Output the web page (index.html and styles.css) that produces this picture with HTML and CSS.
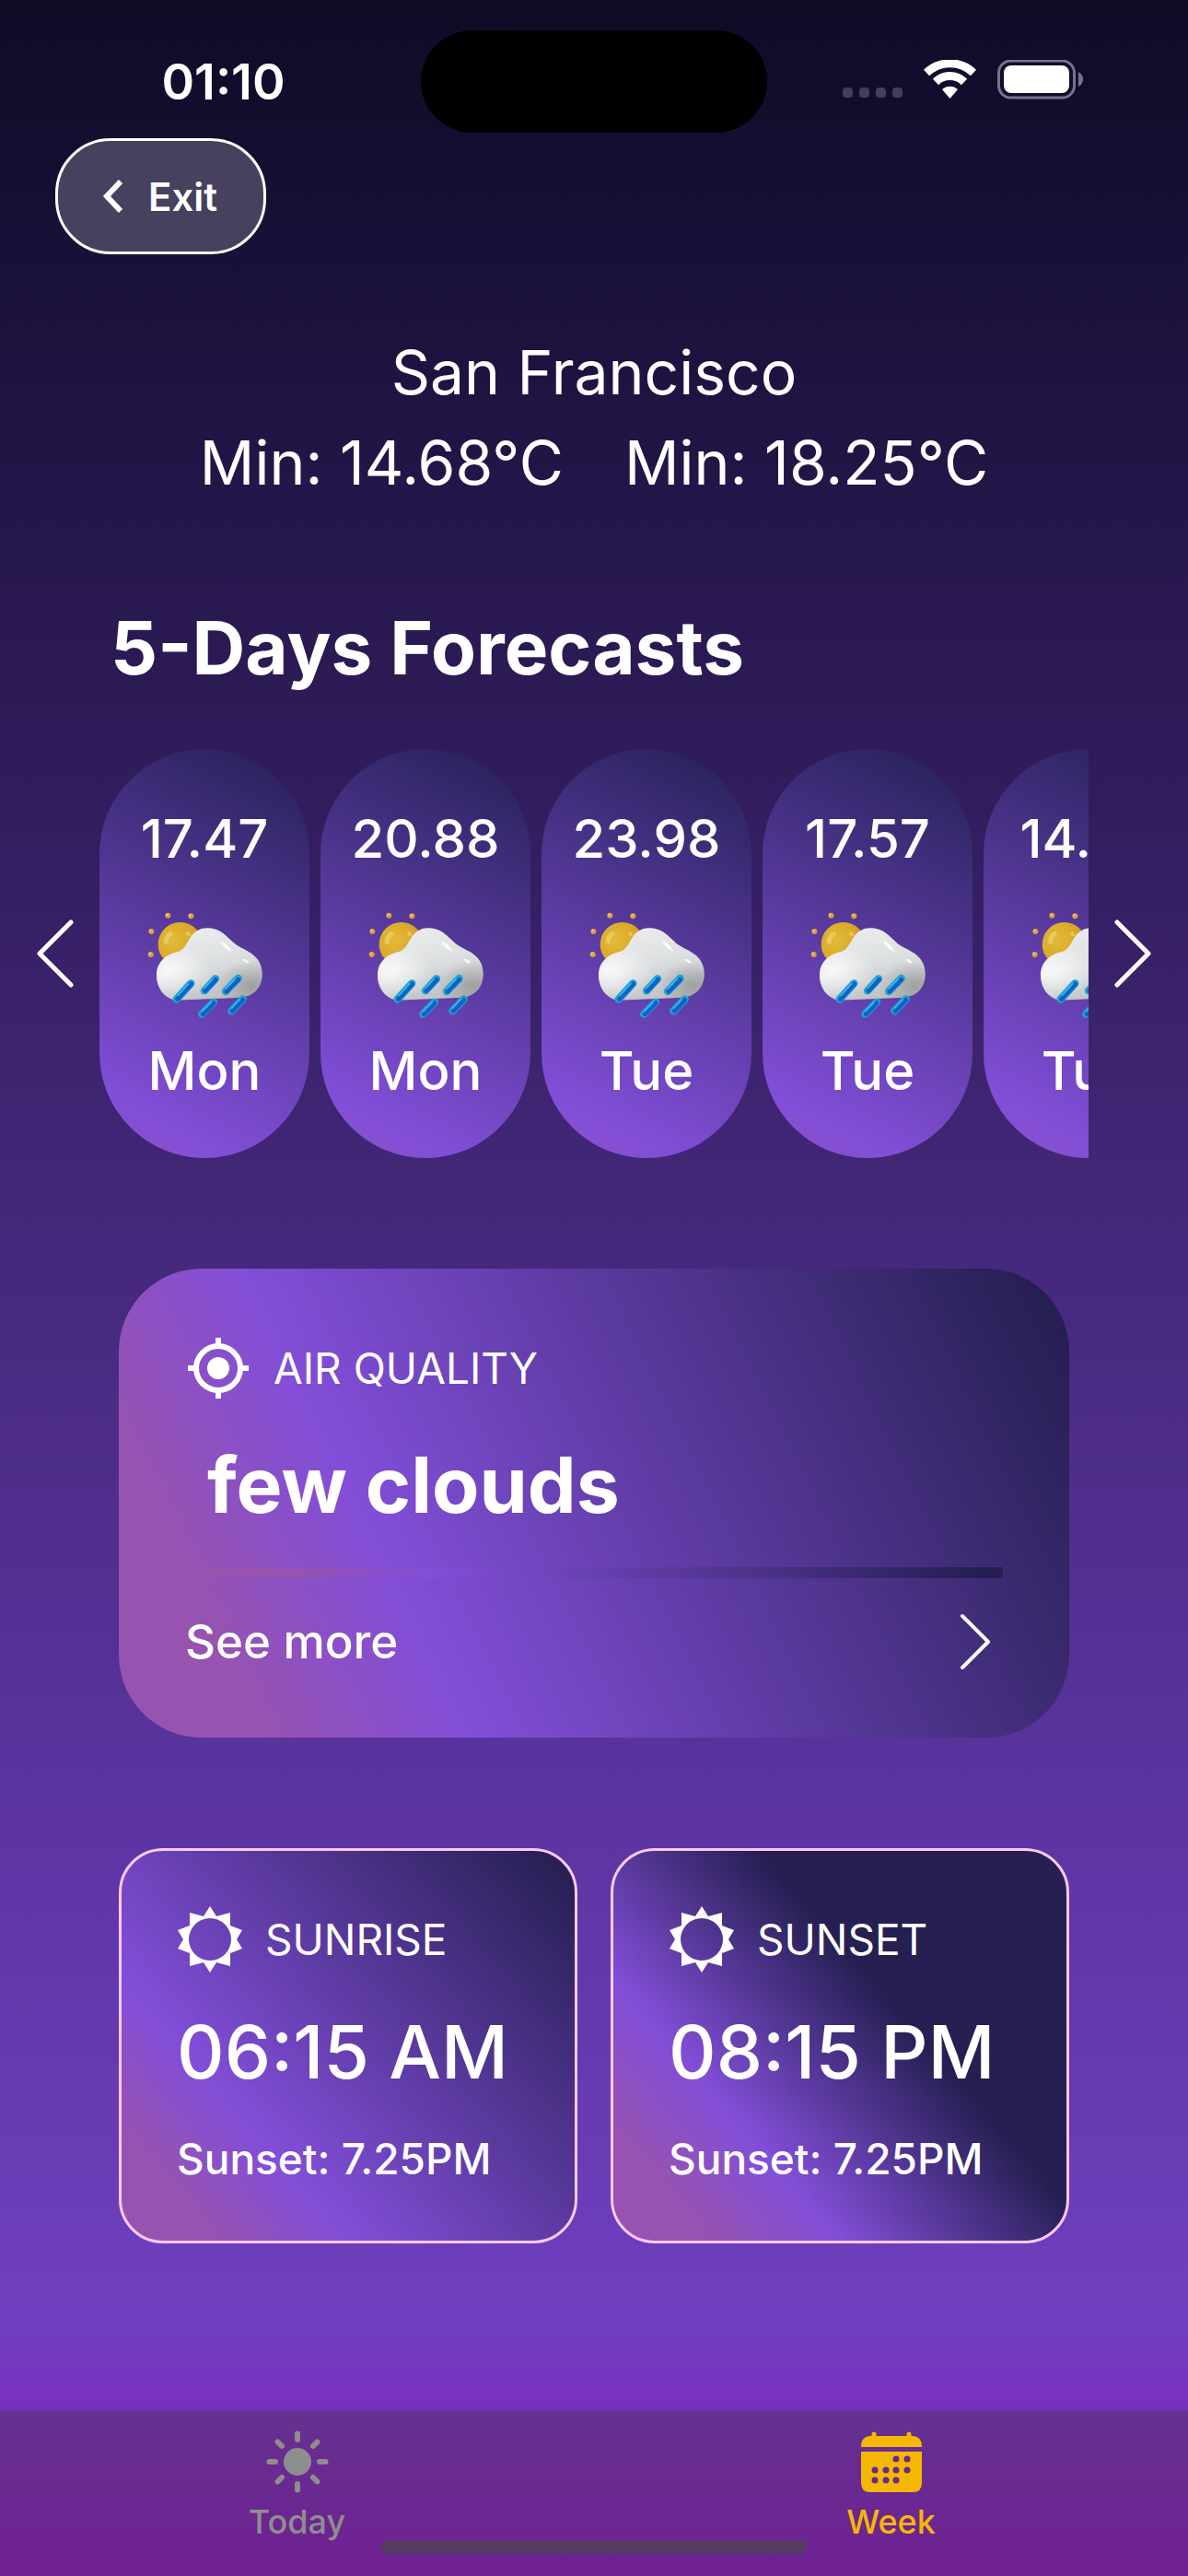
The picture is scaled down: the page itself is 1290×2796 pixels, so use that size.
FILE: index.html
```html
<!DOCTYPE html>
<html lang="en">
<head>
<meta charset="utf-8">
<meta name="viewport" content="width=device-width, initial-scale=1">
<title>Weekly forecast</title>
<link rel="stylesheet" href="styles.css">
</head>
<body>
<svg class="sprite" aria-hidden="true">
  <defs>
    <radialGradient id="sunFill" cx="35%" cy="40%" r="75%">
      <stop offset="0" stop-color="#e2ba38"/>
      <stop offset="0.6" stop-color="#dba92a"/>
      <stop offset="1" stop-color="#c08020"/>
    </radialGradient>
    <linearGradient id="cloudFill" x1="0.3" y1="0" x2="0.6" y2="1">
      <stop offset="0" stop-color="#ececec"/>
      <stop offset="0.5" stop-color="#dcdfe1"/>
      <stop offset="1" stop-color="#bfc0c1"/>
    </linearGradient>
    <radialGradient id="cloudShade" cx="0.9" cy="0.8" r="0.35">
      <stop offset="0" stop-color="#8f8f8f" stop-opacity="0.7"/>
      <stop offset="1" stop-color="#8f8f8f" stop-opacity="0"/>
    </radialGradient>
    <radialGradient id="cloudLight" cx="0.12" cy="0.6" r="0.4">
      <stop offset="0" stop-color="#fff" stop-opacity="0.8"/>
      <stop offset="1" stop-color="#fff" stop-opacity="0"/>
    </radialGradient>
    <symbol id="weather" viewBox="0 0 492 450">
      <circle cx="167" cy="165" r="72" fill="url(#sunFill)"/>
      <path d="M112 160q3-32 26-38l8 10q-18 8-19 34zM184 130l10-8 9 14-9 3z" fill="#f0d878" opacity="0.6"/>
      <g fill="#dca238">
        <circle cx="127" cy="71" r="9"/><circle cx="202" cy="73" r="9"/>
        <circle cx="73" cy="123" r="9"/><circle cx="71" cy="198" r="9"/>
      </g>
      <g fill="#f5d690">
        <circle cx="124" cy="68" r="3"/><circle cx="199" cy="70" r="3"/>
        <circle cx="70" cy="120" r="3"/><circle cx="68" cy="195" r="3"/>
      </g>
      <path d="M150 347C112 338 90 304 90 266C90 222 122 196 160 189C196 180 192 112 256 112C304 112 320 146 352 168C384 188 434 200 434 262C434 308 404 334 366 338Z" fill="url(#cloudFill)"/>
      <path d="M150 347C112 338 90 304 90 266C90 222 122 196 160 189C196 180 192 112 256 112C304 112 320 146 352 168C384 188 434 200 434 262C434 308 404 334 366 338Z" fill="url(#cloudLight)"/>
      <path d="M150 347C112 338 90 304 90 266C90 222 122 196 160 189C196 180 192 112 256 112C304 112 320 146 352 168C384 188 434 200 434 262C434 308 404 334 366 338Z" fill="url(#cloudShade)"/>
      <path d="M296 154q22 4 40 36q-26-8-40-36zM370 212q18 0 22 14q-16 0-22-14z" fill="#fff" opacity="0.85"/>
      <g stroke-linecap="round" fill="none">
        <path d="M155 344L202 292M246 316L282 277M315 318L356 276M238 392L276 353M334 382L371 343" stroke="#1fa3d6" stroke-width="25"/>
        <path d="M158 343L203 294M249 316L283 280M318 318L356 280M241 392L276 356M337 382L371 346" stroke="#1160c8" stroke-width="15"/>
        <path d="M160 332L195 293M247 307L274 278M316 309L346 278M239 383L268 353M335 373L362 344" stroke="#2fc6ee" stroke-width="4"/>
      </g>
    </symbol>
    <symbol id="sunburst" viewBox="0 0 72 72">
      <path fill-rule="evenodd" d="M36 0L43 11L58 7V21L71 26L65 36L71 46L58 51V65L43 61L36 72L29 61L14 65V51L1 46L7 36L1 26L14 21V7L29 11ZM36 13A23 23 0 1 0 36 59A23 23 0 1 0 36 13Z" fill="currentColor"/>
    </symbol>
  </defs>
</svg>

<div class="screen">
  <header class="status">
    <time class="status-time">01:10</time>
    <div class="island"></div>
    <div class="status-icons">
      <svg width="65" height="44" viewBox="0 0 65 44" fill="#433e5a" aria-hidden="true">
        <rect x="0" y="30" width="11" height="11" rx="4"/><rect x="18" y="30" width="11" height="11" rx="4"/>
        <rect x="36" y="30" width="11" height="11" rx="4"/><rect x="54" y="30" width="11" height="11" rx="4"/>
      </svg>
      <svg width="57" height="44" viewBox="0 0 57 44" aria-hidden="true">
        <path d="M3 14A37 37 0 0 1 54 14" fill="none" stroke="#fff" stroke-width="9"/>
        <path d="M13 24A22 22 0 0 1 44 24" fill="none" stroke="#fff" stroke-width="9"/>
        <path d="M20 32A12.500 12.500 0 0 1 37 32L28.500 42Z" fill="#fff"/>
      </svg>
      <svg width="94" height="44" viewBox="0 0 94 44" aria-hidden="true">
        <rect x="1.500" y="1" width="82" height="40" rx="13" fill="none" stroke="#787388" stroke-width="3"/>
        <rect x="7" y="6" width="71" height="30" rx="8" fill="#fff"/>
        <path d="M88 13Q93 16 93 21Q93 26 88 29Z" fill="#787388"/>
      </svg>
    </div>
  </header>

  <button class="exit" type="button">
    <svg width="24" height="38" viewBox="0 0 24 38" aria-hidden="true"><path d="M20 3L5 19L20 35" fill="none" stroke="#fff" stroke-width="6"/></svg>
    Exit
  </button>

  <main class="content">
    <section class="place">
      <h1 class="city">San Francisco</h1>
      <p class="range"><span>Min: 14.68°C</span><span>Min: 18.25°C</span></p>
    </section>

    <h2 class="heading">5-Days Forecasts</h2>

    <section class="carousel">
      <button class="arrow previous" type="button" aria-label="Previous">
        <svg width="42" height="76" viewBox="0 0 42 76" aria-hidden="true"><path d="M38 4L4 38L38 72" class="thin"/></svg>
      </button>
      <ul class="days">
        <li class="day"><span>17.47</span><svg class="weather"><use href="#weather"/></svg><span>Mon</span></li>
        <li class="day"><span>20.88</span><svg class="weather"><use href="#weather"/></svg><span>Mon</span></li>
        <li class="day"><span>23.98</span><svg class="weather"><use href="#weather"/></svg><span>Tue</span></li>
        <li class="day"><span>17.57</span><svg class="weather"><use href="#weather"/></svg><span>Tue</span></li>
        <li class="day"><span>14.68</span><svg class="weather"><use href="#weather"/></svg><span>Tue</span></li>
      </ul>
      <button class="arrow next" type="button" aria-label="Next">
        <svg width="42" height="76" viewBox="0 0 42 76" aria-hidden="true"><path d="M4 4L38 38L4 72" class="thin"/></svg>
      </button>
    </section>

    <section class="air">
      <h3 class="label">
        <svg width="72" height="72" viewBox="0 0 72 72" aria-hidden="true">
          <circle cx="36" cy="36" r="24" fill="none" stroke="#fff" stroke-width="6"/>
          <circle cx="36" cy="36" r="12" fill="#fff"/>
          <path d="M36 3V12M36 60V69M3 36H12M60 36H69" stroke="#fff" stroke-width="6"/>
        </svg>
        AIR QUALITY
      </h3>
      <p class="air-value">few clouds</p>
      <div class="bar"></div>
      <a class="more" href="#">See more
        <svg width="36" height="62" viewBox="0 0 36 62" aria-hidden="true"><path d="M4 3L32 31L4 59" class="thin light"/></svg>
      </a>
    </section>

    <div class="pair">
      <section class="sun sunrise">
        <h3 class="label"><svg width="72" height="72"><use href="#sunburst"/></svg>SUNRISE</h3>
        <p class="sun-time">06:15 AM</p>
        <p class="sun-note">Sunset: 7.25PM</p>
      </section>
      <section class="sun sunset">
        <h3 class="label"><svg width="72" height="72"><use href="#sunburst"/></svg>SUNSET</h3>
        <p class="sun-time">08:15 PM</p>
        <p class="sun-note">Sunset: 7.25PM</p>
      </section>
    </div>
  </main>

  <nav class="tabs">
    <a class="tab" href="#">
      <svg width="68" height="68" viewBox="0 0 68 68" aria-hidden="true">
        <circle cx="34" cy="34" r="15" fill="currentColor"/>
        <path d="M34 3.500V10M34 58V64.500M3.500 34H10M58 34H64.500M12.500 12.500L17 17M51 51L55.500 55.500M55.500 12.500L51 17M17 51L12.500 55.500" stroke="currentColor" stroke-width="6" stroke-linecap="round"/>
      </svg>
      Today
    </a>
    <a class="tab active" href="#">
      <svg width="68" height="68" viewBox="0 0 68 68" aria-hidden="true">
        <path d="M1 18Q1 6 12 6H56Q67 6 67 18ZM1 23H67V57Q67 67 57 67H11Q1 67 1 57Z" fill="currentColor"/>
        <path d="M15 4V8M53 4V8" stroke="currentColor" stroke-width="5" stroke-linecap="round"/>
        <g fill="#67298e">
          <circle cx="39" cy="31" r="3.500"/><circle cx="51" cy="31" r="3.500"/>
          <circle cx="16" cy="43" r="3.500"/><circle cx="28" cy="43" r="3.500"/><circle cx="39" cy="43" r="3.500"/><circle cx="51" cy="43" r="3.500"/>
          <circle cx="16" cy="54" r="3.500"/><circle cx="28" cy="54" r="3.500"/><circle cx="39" cy="54" r="3.500"/>
        </g>
      </svg>
      Week
    </a>
    <div class="home-indicator"></div>
  </nav>
</div>
</body>
</html>
```
FILE: styles.css
```css
* { box-sizing: border-box; margin: 0; padding: 0; }

body {
  font-family: Inter, "Liberation Sans", sans-serif;
  color: #fff;
}

.sprite { position: absolute; width: 0; height: 0; }

.screen {
  min-height: 100vh;
  display: flex;
  flex-direction: column;
  background: linear-gradient(#0e0b26 0%, #1a113a 11%, #2e1b58 28%, #44287b 48%, #5c35a2 71%, #703fbf 90%, #7a2dc0 94%, #8a10c0 100%);
}

button { font: inherit; color: inherit; background: none; border: 0; }
a { color: inherit; text-decoration: none; }
ul { list-style: none; }
svg { display: block; flex: none; }
.thin { fill: none; stroke: #fff; stroke-width: 5; stroke-linecap: round; stroke-linejoin: round; }
.light { stroke-width: 4; }

/* Status bar */
.status {
  display: grid;
  grid-template-columns: 1fr 376px 1fr;
  align-items: center;
  padding-top: 33px;
}
.status-time { text-align: center; padding-left: 28px; font-size: 54px; font-weight: 600; }
.island { height: 111px; border-radius: 56px; background: #000; }
.status-icons { display: flex; gap: 23px; justify-content: flex-end; padding: 0 113px 4px 0; }

.exit {
  align-self: flex-start;
  display: flex;
  align-items: center;
  gap: 26px;
  height: 126px;
  margin: 6px 60px 0;
  padding: 0 50px 0 48px;
  border: 3px solid #fff;
  border-radius: 60px;
  background: #47405f;
  font-size: 42px;
  font-weight: 600;
}

.content { flex: 1; display: flex; flex-direction: column; padding-bottom: 120px; }

.place { margin-top: 79px; text-align: center; font-size: 66px; line-height: 98px; }
.city { font-size: inherit; font-weight: 400; }
.range { display: flex; justify-content: center; gap: 66px; }

.heading { margin: 102px 120px 0; font-size: 80px; line-height: 100px; font-weight: 700; }

/* Forecast carousel */
.carousel { display: flex; margin-top: 60px; }
.arrow { flex: none; width: 108px; display: flex; align-items: center; justify-content: center; }
.previous { padding-left: 12px; }
.next { padding-right: 12px; }
.days { flex: 1; min-width: 0; display: flex; gap: 12px; overflow: hidden; }
.day {
  flex: none;
  width: 228px;
  height: 444px;
  padding-top: 61px;
  display: flex;
  flex-direction: column;
  align-items: center;
  border-radius: 114px;
  background: linear-gradient(27deg, #8c52c2 0%, #824ed8 13%, #28225a 96%);
  font-size: 58px;
  font-weight: 500;
  line-height: 72px;
}
.weather { width: 164px; height: 150px; margin: 24px 0 6px; }

.label { display: flex; align-items: center; gap: 24px; font-size: 46px; font-weight: 400; line-height: 72px; }

/* Air quality card */
.air {
  margin: 120px 129px 0;
  padding: 72px 72px 68px;
  border-radius: 90px;
  background: linear-gradient(64deg, #9753b0 12%, #824ed8 30%, #261f52 97%);
}
.air-value { padding-left: 24px; margin: 39px 0 37px; font-size: 84px; font-weight: 700; line-height: 104px; }
.bar { height: 12px; background: linear-gradient(90deg, #9753b0 12%, #824ed8 30%, #261f52 97%); }
.more {
  display: flex;
  justify-content: space-between;
  align-items: center;
  margin-top: 33px;
  padding-right: 12px;
  font-size: 51px;
  font-weight: 500;
  line-height: 72px;
}

/* Sunrise and sunset cards */
.pair { display: grid; grid-template-columns: 1fr 1fr; gap: 36px; margin: 120px 129px 0; }
.sun { padding: 60px 60px 59px; border: 3px solid #fbc8f6; border-radius: 48px; }
.sunrise { background: linear-gradient(49deg, #9753b0 12%, #824ed8 29%, #261f52 97%) border-box; }
.sunset { background: linear-gradient(49deg, #9753b0 12%, #824ed8 29%, #261f52 61%) border-box; }
.sun-time { margin-top: 36px; font-size: 80px; font-weight: 500; line-height: 100px; white-space: nowrap; }
.sun-note { margin-top: 36px; font-size: 46px; font-weight: 500; line-height: 60px; white-space: nowrap; }

/* Tab bar */
.tabs {
  position: relative;
  height: 180px;
  display: grid;
  grid-template-columns: 1fr 1fr;
  background: linear-gradient(#653191, #702092);
}
.tab {
  display: flex;
  flex-direction: column;
  align-items: center;
  gap: 9px;
  padding-top: 22px;
  color: #8e8e8e;
  font-size: 36px;
  line-height: 44px;
  font-weight: 500;
}
.tab.active { color: #f5b800; }
.home-indicator {
  position: absolute;
  bottom: 24px;
  left: 50%;
  width: 462px;
  height: 15px;
  margin-left: -231px;
  border-radius: 8px;
  background: #563c62;
}
```
